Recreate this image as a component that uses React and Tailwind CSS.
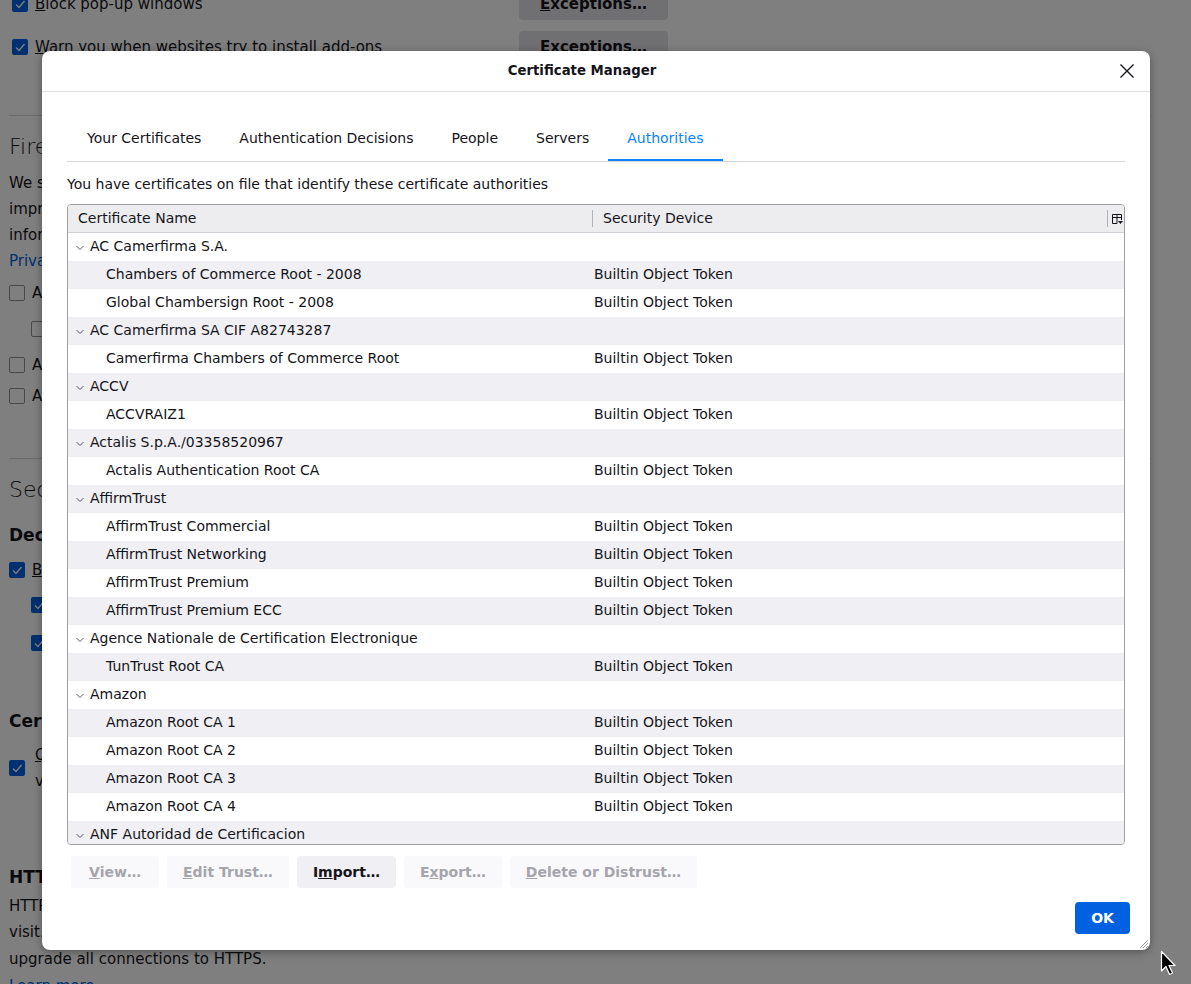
import React from 'react'

const rows = [
  { g: true, name: 'AC Camerfirma S.A.' },
  { name: 'Chambers of Commerce Root - 2008', dev: 'Builtin Object Token' },
  { name: 'Global Chambersign Root - 2008', dev: 'Builtin Object Token' },
  { g: true, name: 'AC Camerfirma SA CIF A82743287' },
  { name: 'Camerfirma Chambers of Commerce Root', dev: 'Builtin Object Token' },
  { g: true, name: 'ACCV' },
  { name: 'ACCVRAIZ1', dev: 'Builtin Object Token' },
  { g: true, name: 'Actalis S.p.A./03358520967' },
  { name: 'Actalis Authentication Root CA', dev: 'Builtin Object Token' },
  { g: true, name: 'AffirmTrust' },
  { name: 'AffirmTrust Commercial', dev: 'Builtin Object Token' },
  { name: 'AffirmTrust Networking', dev: 'Builtin Object Token' },
  { name: 'AffirmTrust Premium', dev: 'Builtin Object Token' },
  { name: 'AffirmTrust Premium ECC', dev: 'Builtin Object Token' },
  { g: true, name: 'Agence Nationale de Certification Electronique' },
  { name: 'TunTrust Root CA', dev: 'Builtin Object Token' },
  { g: true, name: 'Amazon' },
  { name: 'Amazon Root CA 1', dev: 'Builtin Object Token' },
  { name: 'Amazon Root CA 2', dev: 'Builtin Object Token' },
  { name: 'Amazon Root CA 3', dev: 'Builtin Object Token' },
  { name: 'Amazon Root CA 4', dev: 'Builtin Object Token' },
  { g: true, name: 'ANF Autoridad de Certificacion' },
  { name: 'ANF Secure Server Root CA', dev: 'Builtin Object Token' },
]

const tabs = ['Your Certificates', 'Authentication Decisions', 'People', 'Servers', 'Authorities']

// settings page checkbox
const Check = ({ on }) =>
  on ? (
    <span className="flex h-4 w-4 shrink-0 items-center justify-center rounded-[2px] bg-[#0061e0]">
      <svg width="12" height="12" viewBox="0 0 12 12">
        <path d="M2 6.5 L5 9.5 L10.5 3" fill="none" stroke="white" strokeWidth="1.3" />
      </svg>
    </span>
  ) : (
    <span className="h-4 w-4 shrink-0 rounded-[2px] border border-[#8f8f9d] bg-white" />
  )

const Chevron = () => (
  <svg width="10" height="6" viewBox="0 0 10 6" className="mr-[5px] ml-[7px] mt-[2px]">
    <path d="M1.5 1 L5 4.5 L8.5 1" fill="none" stroke="#5b5b66" strokeWidth="1" />
  </svg>
)

const Btn = ({ children, on }) => (
  <div
    className={
      'flex h-8 min-w-[88px] items-center justify-center rounded-[4px] px-4 text-[14px] font-bold ' +
      (on ? 'bg-[#f0f0f4] text-[#15141a]' : 'bg-[#f9f9fb] text-[#a5a5ab]')
    }
  >
    {children}
  </div>
)

const SettingsPage = () => (
  <div className="-mt-[16px] flex flex-col pl-[9px] pr-[40px] text-[15px] text-[#15141a]">
    <div className="flex h-[40px] items-center">
      <div className="flex w-[510px] items-center gap-[7px] pl-[3px]">
        <Check on />
        <span><u>B</u>lock pop-up windows</span>
      </div>
      <div className="flex h-8 w-[149px] items-center justify-center rounded-[4px] bg-[#e0e0e6] font-bold"><u>E</u>xceptions…</div>
    </div>
    <div className="flex h-[44px] items-center pt-[2px]">
      <div className="flex w-[510px] items-center gap-[7px] pl-[3px]">
        <Check on />
        <span><u>W</u>arn you when websites try to install add-ons</span>
      </div>
      <div className="flex h-8 w-[149px] items-center justify-center rounded-[4px] bg-[#e0e0e6] font-bold">Exceptions…</div>
    </div>
    <div className="mt-[47px] h-px bg-[#d7d7db]" />
    <div className="mt-[10px] flex h-[40px] items-center text-[22px] font-light">Firefox Data Collection and Use</div>
    <div className="mt-[4px] leading-[26px]">
      <div>We strive to provide you with choices and collect only what we need to provide and</div>
      <div>improve Firefox for everyone. We always ask permission before receiving personal</div>
      <div>information.</div>
      <div className="text-[#0061e0]">Privacy Notice</div>
    </div>
    <div className="mt-[1px] flex h-[36px] items-center gap-[7px]"><Check /><span>Allow Firefox to send technical and interaction data to Mozilla</span></div>
    <div className="flex h-[36px] items-center gap-[7px] pl-[22px]"><Check /><span>Allow Firefox to make personalized extension recommendations</span></div>
    <div className="flex h-[36px] items-center gap-[7px]"><Check /><span>Allow Firefox to install and run studies</span></div>
    <div className="flex h-[26px] items-center gap-[7px]"><Check /><span>Allow Firefox to send backlogged crash reports on your behalf</span></div>
    <div className="mt-[49px] h-px bg-[#d7d7db]" />
    <div className="mt-[10px] flex h-[40px] items-center text-[22px] font-light">Security</div>
    <div className="mt-[10px] flex h-[34px] items-center text-[17px] font-bold">Deceptive Content and Dangerous Software Protection</div>
    <div className="flex h-[34px] items-center gap-[7px]"><Check on /><span><u>B</u>lock dangerous and deceptive content</span></div>
    <div className="flex h-[36px] items-center gap-[7px] pl-[22px]"><Check on /><span>Block <u>d</u>angerous downloads</span></div>
    <div className="flex h-[40px] items-center gap-[7px] pl-[22px]"><Check on /><span>Warn you about unwanted and <u>u</u>ncommon software</span></div>
    <div className="mt-[39px] flex h-[40px] items-center text-[17px] font-bold">Certificates</div>
    <div className="flex items-center gap-[10px] leading-[26px]">
      <Check on />
      <div>
        <div><u>Q</u>uery OCSP responder servers to confirm the current</div>
        <div>validity of certificates</div>
      </div>
    </div>
    <div className="mt-[70px] flex h-[28px] items-center text-[17px] font-bold">HTTPS-Only Mode</div>
    <div className="mt-[1px] leading-[26px]">
      <div>HTTPS provides a secure, encrypted connection between Firefox and the websites you</div>
      <div>visit. Most websites support HTTPS, and if HTTPS-Only Mode is enabled, then Firefox will</div>
      <div className="leading-[28px]">upgrade all connections to HTTPS.</div>
      <div className="text-[#0061e0] underline">Learn more</div>
    </div>
  </div>
)

export default function App() {
  return (
    <div className="relative h-[984px] w-full overflow-hidden bg-white font-['DejaVu_Sans',sans-serif]">
      <SettingsPage />
      <div className="absolute inset-0 bg-black/50" />

      <div className="absolute left-[42px] top-[51px] flex h-[899px] w-[1108px] flex-col rounded-[8px] bg-white text-[14px] text-[#15141a] shadow-[0_2px_8px_rgba(0,0,0,0.35)]">
        <div className="relative flex h-[41px] shrink-0 items-center justify-center border-b border-[#e0e0e6] pr-[28px]">
          <span className="text-[13.3px] font-bold">Certificate Manager</span>
          <svg className="absolute right-[15px] top-[12px]" width="16" height="16" viewBox="0 0 16 16">
            <path d="M1.5 1.5 L14.5 14.5 M14.5 1.5 L1.5 14.5" stroke="#15141a" strokeWidth="1.4" />
          </svg>
        </div>

        <div className="flex flex-1 flex-col px-[25px] pt-[23px]">
          <div className="flex h-[47px] border-b border-[#d7d7db] pl-px">
            {tabs.map((t) => (
              <div
                key={t}
                className={
                  'flex h-[46px] items-center px-[19px] ' +
                  (t === 'Authorities' ? 'border-b-2 border-[#0a84ff] pt-[2px] text-[#0a84ff]' : '')
                }
              >
                {t}
              </div>
            ))}
          </div>

          <div className="mt-[12px] flex h-[20px] items-center">You have certificates on file that identify these certificate authorities</div>

          <div className="mt-[10px] flex h-[641px] flex-col overflow-hidden rounded-[4px] border border-[#9e9e9e]">
            <div className="flex h-[28px] shrink-0 items-center border-b border-[#cfcfd8] bg-[#ededf0]">
              <div className="w-[524px] pl-[10px]">Certificate Name</div>
              <div className="h-[17px] w-px bg-[#b1b1b9]" />
              <div className="flex-1 pl-[10px]">Security Device</div>
              <div className="h-[17px] w-px bg-[#b1b1b9]" />
              <svg className="ml-[3px] mr-[1px]" width="12" height="12" viewBox="0 0 12 12">
                <path d="M1.5 1.5 H10.5 V7 M1.5 1.5 V10.5 H6 M1.5 4.5 H10.5 M6 1.5 V10.5" fill="none" stroke="#15141a" strokeWidth="1" />
                <path d="M7 8 H12 L9.5 11 Z" fill="#15141a" />
              </svg>
            </div>
            <div className="flex-1 overflow-hidden">
              {rows.map((r, i) => (
                <div key={i} className={'flex h-[28px] items-center pb-[1px] ' + (i % 2 ? 'bg-[#f0f0f4]' : 'bg-white')}>
                  <div className="flex w-[525px] items-center">
                    {r.g ? <Chevron /> : <span className="w-[38px]" />}
                    <span>{r.name}</span>
                  </div>
                  <div className="pl-[1px]">{r.dev}</div>
                </div>
              ))}
            </div>
          </div>

          <div className="mt-[11px] flex gap-[8px] pl-1">
            <Btn><u>V</u>iew…</Btn>
            <Btn><u>E</u>dit Trust…</Btn>
            <Btn on>I<u>m</u>port…</Btn>
            <Btn>E<u>x</u>port…</Btn>
            <Btn><u>D</u>elete or Distrust…</Btn>
          </div>

          <div className="-mr-[5px] mt-[14px] flex justify-end">
            <div className="flex h-8 w-[55px] items-center justify-center rounded-[4px] bg-[#0061e0] font-bold text-white">OK</div>
          </div>
        </div>

        <svg className="absolute bottom-[1px] right-[1px]" width="11" height="11" viewBox="0 0 11 11">
          <path d="M10 2 L2 10 M10 5 L5 10 M10 8 L8 10" stroke="#9e9e9e" strokeWidth="1" />
        </svg>
      </div>

      <svg className="absolute left-[1160px] top-[950px]" width="18" height="27" viewBox="0 0 18 27">
        <path d="M1.5 1.5 V21 L6 16.5 L9.5 24.5 L12.5 23 L9 15.5 L15 15.5 Z" fill="#000" stroke="#fff" strokeWidth="1.2" strokeLinejoin="round" />
      </svg>
    </div>
  )
}
